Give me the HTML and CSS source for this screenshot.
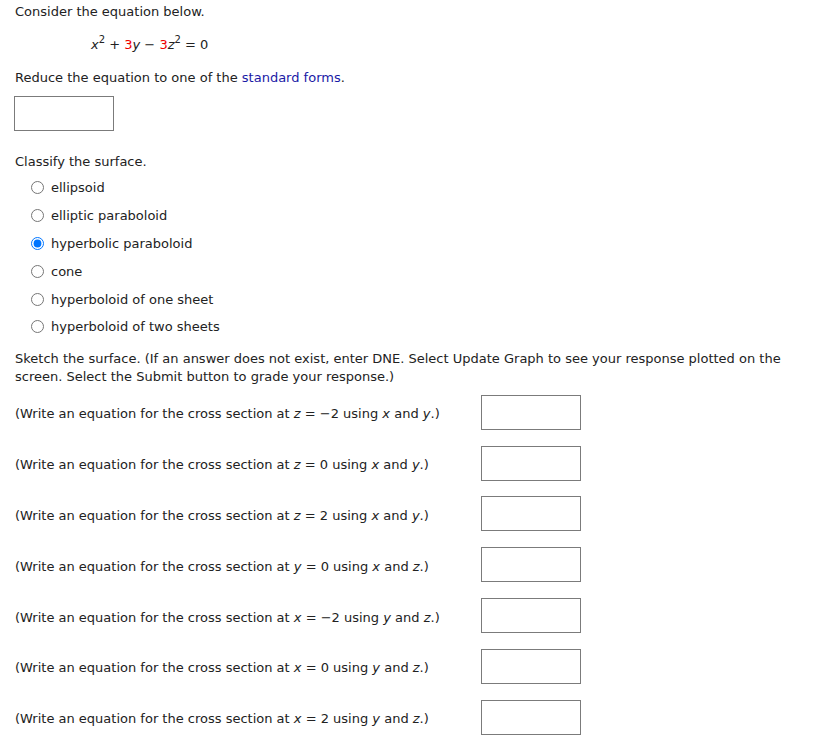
FILE: index.html
```html
<!DOCTYPE html>
<html>
<head>
<meta charset="utf-8">
<link rel="stylesheet" href="styles.css">
</head>
<body>
<div class="page">
  <p class="line l1">Consider the equation below.</p>
  <p class="line eq"><i>x</i><sup>2</sup> + <span class="red">3</span><i>y</i> − <span class="red">3</span><i>z</i><sup>2</sup> = 0</p>
  <p class="line l3">Reduce the equation to one of the <span class="link">standard forms</span>.</p>
  <div class="box first"></div>
  <p class="line classify">Classify the surface.</p>
  <ul class="opts">
    <li><label><input type="radio" name="s"><span>ellipsoid</span></label></li>
    <li><label><input type="radio" name="s"><span>elliptic paraboloid</span></label></li>
    <li><label><input type="radio" name="s" checked><span>hyperbolic paraboloid</span></label></li>
    <li><label><input type="radio" name="s"><span>cone</span></label></li>
    <li><label><input type="radio" name="s"><span>hyperboloid of one sheet</span></label></li>
    <li><label><input type="radio" name="s"><span>hyperboloid of two sheets</span></label></li>
  </ul>
  <p class="line sketch">Sketch the surface. (If an answer does not exist, enter DNE. Select Update Graph to see your response plotted on the screen. Select the Submit button to grade your response.)</p>
  <div class="rows">
    <div class="row"><span class="lbl">(Write an equation for the cross section at <i>z</i> = −2 using <i>x</i> and <i>y</i>.)</span><div class="box"></div></div>
    <div class="row"><span class="lbl">(Write an equation for the cross section at <i>z</i> = 0 using <i>x</i> and <i>y</i>.)</span><div class="box"></div></div>
    <div class="row"><span class="lbl">(Write an equation for the cross section at <i>z</i> = 2 using <i>x</i> and <i>y</i>.)</span><div class="box"></div></div>
    <div class="row"><span class="lbl">(Write an equation for the cross section at <i>y</i> = 0 using <i>x</i> and <i>z</i>.)</span><div class="box"></div></div>
    <div class="row"><span class="lbl">(Write an equation for the cross section at <i>x</i> = −2 using <i>y</i> and <i>z</i>.)</span><div class="box"></div></div>
    <div class="row"><span class="lbl">(Write an equation for the cross section at <i>x</i> = 0 using <i>y</i> and <i>z</i>.)</span><div class="box"></div></div>
    <div class="row"><span class="lbl">(Write an equation for the cross section at <i>x</i> = 2 using <i>y</i> and <i>z</i>.)</span><div class="box"></div></div>
  </div>
</div>
</body>
</html>
```
FILE: styles.css
```css
html, body {
  margin: 0;
  padding: 0;
  background: #fff;
}
body {
  font-family: Verdana, "DejaVu Sans", sans-serif;
  font-size: 13px;
  color: #222;
}
.page {
  padding: 3px 14px 0 15px;
}
.line {
  margin: 0;
  line-height: 18px;
}
i {
  font-style: oblique;
}
.red {
  color: #e00;
}
.link {
  color: #1a1aa6;
}
.eq {
  margin-top: 15px;
  padding-left: 76px;
}
.eq sup {
  font-size: 10px;
  line-height: 0;
  vertical-align: 6px;
}
.l3 {
  margin-top: 15px;
}
.box {
  width: 98px;
  height: 33px;
  border: 1px solid #7b7b7b;
  background: #fff;
  flex: none;
}
.box.first {
  margin-top: 9px;
  margin-left: -1px;
}
.classify {
  margin-top: 22px;
}
.opts {
  list-style: none;
  margin: 3px 0 0 0;
  padding: 0 0 0 16px;
}
.opts li {
  height: 27.8px;
  display: flex;
  align-items: center;
}
.opts label {
  display: flex;
  align-items: center;
}
.opts input {
  margin: 0 7px 0 0;
  width: 13px;
  height: 13px;
}
.sketch {
  margin-top: 9px;
  padding-right: 20px;
}
.rows {
  margin-top: 9px;
  display: flex;
  flex-direction: column;
  gap: 15.83px;
}
.row {
  display: flex;
  align-items: center;
  height: 35px;
}
.lbl {
  width: 466px;
  flex: none;
  line-height: 18px;
  padding-top: 4px;
}
```
